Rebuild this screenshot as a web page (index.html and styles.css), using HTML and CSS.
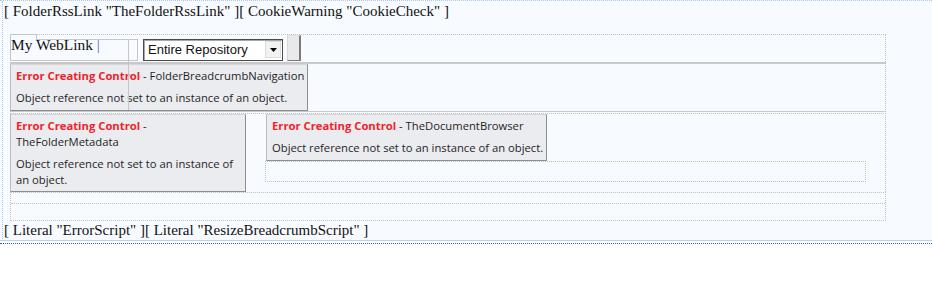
FILE: index.html
```html
<!DOCTYPE html>
<html>
<head>
<meta charset="utf-8">
<title>Design view</title>
<link rel="stylesheet" href="styles.css">
</head>
<body>
<div class="page">
  <div class="frame">
    <div class="code-line">[ FolderRssLink "TheFolderRssLink" ][ CookieWarning "CookieCheck" ]</div>
    <div class="layout">
      <div class="top-table">
        <div class="row1">
          <div class="weblink">My WebLink <span class="caret">|</span></div>
          <div class="select">
            <span class="select-text">Entire Repository</span>
            <span class="select-btn"><svg width="7" height="4" viewBox="0 0 7 4"><polygon points="0,0 7,0 3.5,4" fill="#000"/></svg></span>
          </div>
          <div class="go-btn"></div>
          <span class="tb-tab"></span>
          <span class="tb-box"></span>
          <span class="tb-bottom"></span>
          <span class="tb-frame"></span>
        </div>
        <div class="row2">
          <div class="err">
            <p class="err-title"><span class="err-label">Error Creating Control</span> - FolderBreadcrumbNavigation</p>
            <p class="err-msg">Object reference not set to an instance of an object.</p>
          </div>
        </div>
      </div>
      <div class="mid">
        <div class="cell-left">
          <div class="err err-wrap">
            <p class="err-title"><span class="err-label">Error Creating Control</span> - TheFolderMetadata</p>
            <p class="err-msg">Object reference not set to an instance of an object.</p>
          </div>
        </div>
        <div class="cell-right">
          <div class="err err-right">
            <p class="err-title"><span class="err-label">Error Creating Control</span> - TheDocumentBrowser</p>
            <p class="err-msg">Object reference not set to an instance of an object.</p>
          </div>
          <div class="placeholder"></div>
        </div>
      </div>
      <div class="row3">
        <div class="r3a"></div>
        <div class="r3b"></div>
      </div>
    </div>
    <div class="code-line">[ Literal "ErrorScript" ][ Literal "ResizeBreadcrumbScript" ]</div>
  </div>
</div>
<div class="under"></div>
</body>
</html>
```
FILE: styles.css
```css
html, body {
  margin: 0;
  padding: 0;
  background: #ffffff;
}

.page {
  background: #f7fbff;
  border-top: 1px dotted #a9c7e8;
  border-bottom: 1px solid #b7d2ef;
  padding-bottom: 1px;
  font-family: "Liberation Serif", "Times New Roman", serif;
}

.frame {
  margin-left: 2px;
  border-left: 1px dotted #a9c7e8;
}

.code-line {
  font-size: 15px;
  line-height: 18px;
  color: #111;
  padding-left: 1px;
  white-space: nowrap;
}

.code-line:first-child {
  padding-top: 1px;
}

.layout {
  margin: 14px 0 0 7px;
  width: 876px;
}

.row1 {
  position: relative;
  display: flex;
  align-items: flex-start;
  height: 27px;
  border-top: 1px dotted #c0c0c0;
  border-right: 1px dotted #c0c0c0;
}

.weblink {
  box-sizing: border-box;
  width: 127px;
  height: 26px;
  margin-right: 6px;
  padding-top: 1px;
  border-left: 1px solid #c6c6c6;
  font-size: 15.4px;
  line-height: 18px;
  color: #111;
  white-space: nowrap;
}

.caret {
  color: #5c5cd0;
}

.select {
  box-sizing: border-box;
  display: flex;
  align-items: flex-start;
  width: 140px;
  height: 22px;
  margin-top: 4px;
  border: 1px solid #4a4a4a;
  box-shadow: inset 1px 1px 0 #a8a8a8;
  background: #ffffff;
  font-family: "Liberation Sans", Arial, sans-serif;
  font-size: 13px;
  line-height: 20px;
  color: #111;
}

.select-text {
  flex: 1;
  padding-left: 4px;
  white-space: nowrap;
}

.select-btn {
  box-sizing: border-box;
  display: flex;
  align-items: center;
  justify-content: center;
  width: 16px;
  height: 17px;
  margin: 1px 1px 0 0;
  background: #f2f2f2;
  border: 1px solid #dcdcdc;
}

.go-btn {
  box-sizing: border-box;
  width: 14px;
  height: 26px;
  margin-left: 4px;
  background: #e9e9e9;
  border-left: 1px solid #d8d8d8;
  border-top: 1px solid #e2e2e2;
  border-right: 2px solid #7a7a7a;
  border-bottom: 1px solid #7a7a7a;
}

.tb-tab {
  position: absolute;
  left: 0;
  top: -1px;
  box-sizing: border-box;
  width: 27px;
  height: 6px;
  border: 1px solid #c6c6c6;
  border-bottom: none;
}

.tb-box {
  position: absolute;
  left: 26px;
  top: 4px;
  box-sizing: border-box;
  width: 102px;
  height: 22px;
  border: 1px solid #c6c6c6;
  border-left: none;
}

.tb-bottom {
  position: absolute;
  left: 0;
  top: 25px;
  width: 27px;
  height: 1px;
  background: #c6c6c6;
}

.tb-frame {
  position: absolute;
  left: 118px;
  top: 5px;
  width: 1px;
  height: 70px;
  background: #c6c6c6;
  z-index: 2;
}

.row2 {
  border-top: 2px solid #c8c8c8;
  border-bottom: 1px solid #c8c8c8;
  border-right: 1px dotted #c0c0c0;
}

.err {
  box-sizing: border-box;
  width: fit-content;
  background: #ebecef;
  border: 1px solid;
  border-color: #d6d6d6 #8e8e8e #8e8e8e #bcbcbc;
  padding: 3px 3px 4px 5px;
  font-family: "Open Sans", "Noto Sans", sans-serif;
  font-size: 11.25px;
  line-height: 16px;
  color: #1f1f1f;
}

.err p {
  margin: 0;
}

.err-title {
  margin-bottom: 6px !important;
}

.err-label {
  color: #f0232b;
  font-weight: bold;
}

.mid {
  display: flex;
  margin-top: 1px;
  border-top: 1px dotted #c0c0c0;
  border-right: 1px dotted #c0c0c0;
}

.cell-left {
  width: 236px;
  flex: none;
}

.err-wrap {
  width: 236px;
  padding-bottom: 3px;
}

.cell-right {
  flex: 1;
  padding: 0 19px;
}

.err-right {
  margin-left: 1px;
}

.placeholder {
  height: 19px;
  border: 1px dotted #c0c0c0;
}

.row3 {
  border-top: 1px dotted #c0c0c0;
  border-bottom: 1px dotted #c0c0c0;
  border-left: 1px dotted #c0c0c0;
  border-right: 1px dotted #c0c0c0;
}

.r3a {
  height: 10px;
  border-bottom: 1px dotted #c0c0c0;
}

.r3b {
  height: 16px;
}

.under {
  margin-top: 2px;
  border-top: 1px dotted #3d5d9c;
}
```
